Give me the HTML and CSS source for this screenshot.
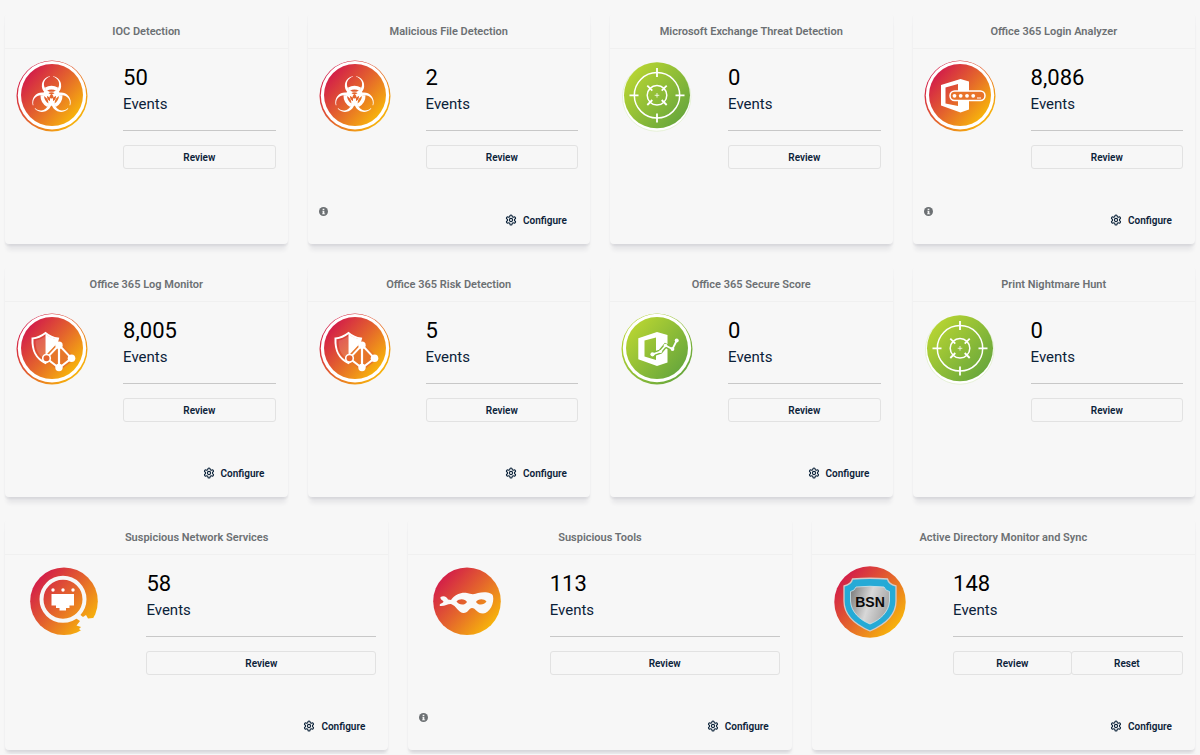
FILE: index.html
```html
<!DOCTYPE html>
<html lang="en">
<head>
    <meta charset="UTF-8">
    <meta name="viewport" content="width=device-width, initial-scale=1.0">
    <title>Security Apps</title>
    <link rel="stylesheet" href="styles.css">
</head>
<body>

    <!-- shared icons -->
    <svg class="sprite" aria-hidden="true">
        <defs>
            <linearGradient id="hot" x1="0.1" y1="0.15" x2="0.9" y2="0.85">
                <stop offset="0" stop-color="#d21b4a"/>
                <stop offset="0.5" stop-color="#e4652c"/>
                <stop offset="1" stop-color="#f8b70a"/>
            </linearGradient>
            <linearGradient id="green" x1="0.1" y1="0.15" x2="0.9" y2="0.85">
                <stop offset="0" stop-color="#b7d432"/>
                <stop offset="1" stop-color="#68a73c"/>
            </linearGradient>
            <linearGradient id="steel" x1="0" y1="0" x2="1" y2="0.3">
                <stop offset="0" stop-color="#777"/>
                <stop offset="0.55" stop-color="#d8d8d8"/>
                <stop offset="1" stop-color="#aaa"/>
            </linearGradient>

            <symbol id="badge-hot" viewBox="0 0 72 72">
                <circle cx="36" cy="36" r="35.5" fill="url(#hot)"/>
                <circle cx="36" cy="35.2" r="34.2" fill="#fff"/>
                <circle cx="36" cy="35" r="31" fill="url(#hot)"/>
            </symbol>
            <symbol id="badge-green" viewBox="0 0 72 72">
                <circle cx="36" cy="36" r="35.5" fill="url(#green)"/>
                <circle cx="36" cy="35" r="34.2" fill="#fff"/>
                <circle cx="36" cy="35" r="31" fill="url(#green)"/>
            </symbol>

            <symbol id="biohazard" viewBox="0 0 72 72">
                <use href="#badge-hot"/>
                <g fill="#fff" transform="translate(35.5 36.7)">
                    <path id="arm" d="M-2-20.5A9.7 9.7 0 1 0 2-20.5L1.5-19.9A7.6 7.6 0 1 1-1.5-19.9z"/>
                    <use href="#arm" transform="rotate(120)"/>
                    <use href="#arm" transform="rotate(240)"/>
                    <circle r="4.5" fill="#e4652c"/>
                    <path id="arc" d="M-5.8-7.3Q0-10.8 5.8-7.3" fill="none" stroke="#fff" stroke-width="3.6"/>
                    <use href="#arc" transform="rotate(120)"/>
                    <use href="#arc" transform="rotate(240)"/>
                    <path d="M0 9V1M-7.8-4.5L-1-.6M7.8-4.5L1-.6" stroke="#fff" stroke-width="3"/>
                    <circle r="1.9" fill="#e4652c"/>
                </g>
            </symbol>

            <symbol id="target" viewBox="0 0 72 72">
                <circle cx="35.7" cy="37" r="34.2" fill="#fff" stroke="#d9ebc0" stroke-width="0.6"/>
                <circle cx="36" cy="35.3" r="33" fill="url(#green)"/>
                <g fill="none" stroke="#fff" stroke-width="1.5">
                    <circle cx="36" cy="35.3" r="22.7"/>
                    <circle cx="36" cy="35.3" r="9.8"/>
                    <path d="M36 8v9M36 53.5v9M8.5 35.3h9M54.5 35.3h9" stroke-width="1.8"/>
                    <path d="M26.3 25.6l5 5M45.7 25.6l-5 5M26.3 45l5-5M45.7 45l-5-5" stroke-width="1.8"/>
                    <path d="M36 33v4.6M33.7 35.3h4.6" stroke-width="0.8"/>
                </g>
            </symbol>

            <symbol id="office-login" viewBox="0 0 72 72">
                <use href="#badge-hot"/>
                <path fill="#fff" fill-rule="evenodd" d="M17 25L36.5 19L45 21.5V49.5L36.5 52.5L17 45.5zM21.5 27.5V43.5L34 46V24z"/>
                <rect x="26" y="31" width="35" height="9.5" rx="4.7" fill="#e8732a" stroke="#fff" stroke-width="1.5"/>
                <g fill="#fff">
                    <circle cx="30.5" cy="35.8" r="1.9"/>
                    <circle cx="36.7" cy="35.8" r="1.9"/>
                    <circle cx="43" cy="35.8" r="1.9"/>
                    <circle cx="49.2" cy="35.8" r="1.9"/>
                    <rect x="53" y="37.5" width="4" height="1"/>
                </g>
            </symbol>

            <symbol id="shield-net" viewBox="0 0 72 72">
                <use href="#badge-hot"/>
                <path d="M29.5 20C25 23.5 21 25 16.5 25.5C16 37 19 45 29.5 50C33 48 35 46 37 43.5L42 25.5C37.5 25 33.5 23.5 29.5 20z" fill="none" stroke="#fff" stroke-width="2"/>
                <path d="M29.5 23C26 25.5 23 27 19.5 27.5C19.5 36 22 42.5 29.5 46.5z" fill="#fff" opacity="0.15"/>
                <path d="M29.5 21C33 24 37 25.5 42 26L40 36L32 43L29.5 47z" fill="#fff"/>
                <path d="M43 32L30.5 45.3L43 55L55.5 45.3z" fill="#e77629" stroke="#e77629" stroke-width="5"/>
                <path d="M43 32L30.5 45.3L43 55L55.5 45.3z" fill="#e77629" stroke="#fff" stroke-width="2"/>
                <path d="M43 32V55" stroke="#fff" stroke-width="2.2"/>
                <circle cx="43" cy="32.3" r="3.7" fill="#fff"/>
                <circle cx="30.5" cy="45.3" r="3.8" fill="#e4632d" stroke="#fff" stroke-width="1.6"/>
                <circle cx="55.5" cy="45.3" r="3.8" fill="#fff"/>
                <circle cx="43" cy="54.5" r="3.7" fill="#fff"/>
            </symbol>

            <symbol id="office-score" viewBox="0 0 72 72">
                <use href="#badge-green"/>
                <path fill="#fff" fill-rule="evenodd" d="M17.3 25.3L36 19L46.5 22V49.5L36 53L17.3 46.3zM23.5 27.5V43.5L35 47V24.5z"/>
                <path d="M31.5 41.3L39.5 38.5L44.5 32.5L51.5 36L55.7 27.5" fill="none" stroke="#7fb73a" stroke-width="4.5"/>
                <path d="M31.5 41.3L39.5 38.5L44.5 32.5L51.5 36L55.7 27.5" fill="none" stroke="#fff" stroke-width="1.8"/>
                <g fill="#fff">
                    <circle cx="31.5" cy="41.3" r="2.1"/>
                    <circle cx="39.5" cy="38.5" r="1.6"/>
                    <circle cx="44.5" cy="32.5" r="1.8"/>
                    <circle cx="51.5" cy="36" r="1.9"/>
                    <circle cx="55.7" cy="27.5" r="2"/>
                </g>
            </symbol>

            <symbol id="port-search" viewBox="0 0 72 72">
                <circle cx="36" cy="35.3" r="33.8" fill="url(#hot)"/>
                <circle cx="35" cy="33.3" r="21.5" fill="none" stroke="#f7f7f7" stroke-width="4"/>
                <path fill="#f7f7f7" d="M46 51L50 47L55 51L58 49L60 52.5L65 52L66.5 54L72 54V72H54L53.5 65L51 63L53 61L48.5 59.5L52 55z"/>
                <path fill="#fff" d="M23.5 28H46V39.5H41.5V42H38V44.5H31.5V42H28V39.5H23.5z"/>
                <g fill="#fff">
                    <circle cx="25" cy="24" r="1.7"/>
                    <circle cx="35" cy="24" r="1.7"/>
                    <circle cx="45" cy="24" r="1.7"/>
                </g>
            </symbol>

            <symbol id="mask" viewBox="0 0 72 72">
                <circle cx="36" cy="35.3" r="33.8" fill="url(#hot)"/>
                <path fill="#f9f9f9" fill-rule="evenodd" d="M20 34C24 28 31 26 36 27C40 28.5 44 28.5 47 27C53 25.5 61 26 62 30C63.5 37 59 47 52 47.5C46 47.5 44.5 42 41 42C38 42 37 47.5 32 47C27 46 25.5 40 20 38C17 37.5 14 40.5 9 40C7.5 37.5 12 37.5 12.5 35.5C11.5 34 9 33.5 9.5 31C13 29 16 31 17 33.5zM25.5 35.5C28 32.5 34 32.5 36 36C34 39.5 28 39.5 25.5 35.5zM45 36C47 32.5 53 32.5 55.5 35.5C53 39.5 47 39.5 45 36z"/>
            </symbol>

            <symbol id="bsn" viewBox="0 0 72 72">
                <circle cx="36" cy="36" r="35.7" fill="url(#hot)"/>
                <path d="M18.5 13Q36 11.5 53.5 13Q54.5 18 62 20V35C62 50 50 59 36 65C22 59 10 50 10 35V20Q17.5 18 18.5 13z" fill="#25aad6" stroke="#d5c9c6" stroke-width="1.3"/>
                <path d="M22 21Q36 19.5 50 21Q51.5 25 55.5 25.5V35C55 46 46 54 36 58C26 54 17 46 16.5 35V25.5Q20.5 25 22 21z" fill="url(#steel)" stroke="#d5e4ea" stroke-width="0.8"/>
                <text x="36" y="41" class="bsn-text" text-anchor="middle">BSN</text>
            </symbol>

            <symbol id="gear" viewBox="0 0 24 24">
                <g fill="none" stroke="currentColor" stroke-width="2.2">
                    <path d="M12.22 2h-.44a2 2 0 0 0-2 2v.18a2 2 0 0 1-1 1.73l-.43.25a2 2 0 0 1-2 0l-.15-.08a2 2 0 0 0-2.73.73l-.22.38a2 2 0 0 0 .73 2.73l.15.1a2 2 0 0 1 1 1.72v.51a2 2 0 0 1-1 1.74l-.15.09a2 2 0 0 0-.73 2.73l.22.38a2 2 0 0 0 2.73.73l.15-.08a2 2 0 0 1 2 0l.43.25a2 2 0 0 1 1 1.73V20a2 2 0 0 0 2 2h.44a2 2 0 0 0 2-2v-.18a2 2 0 0 1 1-1.73l.43-.25a2 2 0 0 1 2 0l.15.08a2 2 0 0 0 2.73-.73l.22-.39a2 2 0 0 0-.73-2.73l-.15-.08a2 2 0 0 1-1-1.74v-.5a2 2 0 0 1 1-1.74l.15-.09a2 2 0 0 0 .73-2.73l-.22-.38a2 2 0 0 0-2.73-.73l-.15.08a2 2 0 0 1-2 0l-.43-.25a2 2 0 0 1-1-1.73V4a2 2 0 0 0-2-2z"/>
                    <circle cx="12" cy="12" r="3.2"/>
                </g>
            </symbol>

            <symbol id="info" viewBox="0 0 16 16">
                <circle cx="8" cy="8" r="8" fill="currentColor"/>
                <path d="M6.5 3h3v2.5h-3zM6 6.5h3.5v5H11V13H5.5v-1.5h1V8H6z" fill="#f7f7f7"/>
            </symbol>
        </defs>
    </svg>

    <main class="app-grid">
        <section class="card">
            <h2 class="card-title">IOC Detection</h2>
            <div class="card-body">
                <div class="card-icon"><svg><use href="#biohazard"/></svg></div>
                <div class="card-info">
                    <p class="count">50</p>
                    <p class="label">Events</p>
                    <hr>
                    <div class="actions"><button type="button">Review</button></div>
                </div>
            </div>
        </section>

        <section class="card">
            <h2 class="card-title">Malicious File Detection</h2>
            <div class="card-body">
                <div class="card-icon"><svg><use href="#biohazard"/></svg></div>
                <div class="card-info">
                    <p class="count">2</p>
                    <p class="label">Events</p>
                    <hr>
                    <div class="actions"><button type="button">Review</button></div>
                </div>
            </div>
            <div class="card-footer">
                <svg class="info-icon"><use href="#info"/></svg>
                <button type="button" class="configure"><svg><use href="#gear"/></svg>Configure</button>
            </div>
        </section>

        <section class="card">
            <h2 class="card-title">Microsoft Exchange Threat Detection</h2>
            <div class="card-body">
                <div class="card-icon"><svg><use href="#target"/></svg></div>
                <div class="card-info">
                    <p class="count">0</p>
                    <p class="label">Events</p>
                    <hr>
                    <div class="actions"><button type="button">Review</button></div>
                </div>
            </div>
        </section>

        <section class="card">
            <h2 class="card-title">Office 365 Login Analyzer</h2>
            <div class="card-body">
                <div class="card-icon"><svg><use href="#office-login"/></svg></div>
                <div class="card-info">
                    <p class="count">8,086</p>
                    <p class="label">Events</p>
                    <hr>
                    <div class="actions"><button type="button">Review</button></div>
                </div>
            </div>
            <div class="card-footer">
                <svg class="info-icon"><use href="#info"/></svg>
                <button type="button" class="configure"><svg><use href="#gear"/></svg>Configure</button>
            </div>
        </section>

        <section class="card">
            <h2 class="card-title">Office 365 Log Monitor</h2>
            <div class="card-body">
                <div class="card-icon"><svg><use href="#shield-net"/></svg></div>
                <div class="card-info">
                    <p class="count">8,005</p>
                    <p class="label">Events</p>
                    <hr>
                    <div class="actions"><button type="button">Review</button></div>
                </div>
            </div>
            <div class="card-footer">
                <button type="button" class="configure"><svg><use href="#gear"/></svg>Configure</button>
            </div>
        </section>

        <section class="card">
            <h2 class="card-title">Office 365 Risk Detection</h2>
            <div class="card-body">
                <div class="card-icon"><svg><use href="#shield-net"/></svg></div>
                <div class="card-info">
                    <p class="count">5</p>
                    <p class="label">Events</p>
                    <hr>
                    <div class="actions"><button type="button">Review</button></div>
                </div>
            </div>
            <div class="card-footer">
                <button type="button" class="configure"><svg><use href="#gear"/></svg>Configure</button>
            </div>
        </section>

        <section class="card">
            <h2 class="card-title">Office 365 Secure Score</h2>
            <div class="card-body">
                <div class="card-icon"><svg><use href="#office-score"/></svg></div>
                <div class="card-info">
                    <p class="count">0</p>
                    <p class="label">Events</p>
                    <hr>
                    <div class="actions"><button type="button">Review</button></div>
                </div>
            </div>
            <div class="card-footer">
                <button type="button" class="configure"><svg><use href="#gear"/></svg>Configure</button>
            </div>
        </section>

        <section class="card">
            <h2 class="card-title">Print Nightmare Hunt</h2>
            <div class="card-body">
                <div class="card-icon"><svg><use href="#target"/></svg></div>
                <div class="card-info">
                    <p class="count">0</p>
                    <p class="label">Events</p>
                    <hr>
                    <div class="actions"><button type="button">Review</button></div>
                </div>
            </div>
        </section>

        <section class="card wide">
            <h2 class="card-title">Suspicious Network Services</h2>
            <div class="card-body">
                <div class="card-icon"><svg><use href="#port-search"/></svg></div>
                <div class="card-info">
                    <p class="count">58</p>
                    <p class="label">Events</p>
                    <hr>
                    <div class="actions"><button type="button">Review</button></div>
                </div>
            </div>
            <div class="card-footer">
                <button type="button" class="configure"><svg><use href="#gear"/></svg>Configure</button>
            </div>
        </section>

        <section class="card wide">
            <h2 class="card-title">Suspicious Tools</h2>
            <div class="card-body">
                <div class="card-icon"><svg><use href="#mask"/></svg></div>
                <div class="card-info">
                    <p class="count">113</p>
                    <p class="label">Events</p>
                    <hr>
                    <div class="actions"><button type="button">Review</button></div>
                </div>
            </div>
            <div class="card-footer">
                <svg class="info-icon"><use href="#info"/></svg>
                <button type="button" class="configure"><svg><use href="#gear"/></svg>Configure</button>
            </div>
        </section>

        <section class="card wide">
            <h2 class="card-title">Active Directory Monitor and Sync</h2>
            <div class="card-body">
                <div class="card-icon"><svg><use href="#bsn"/></svg></div>
                <div class="card-info">
                    <p class="count">148</p>
                    <p class="label">Events</p>
                    <hr>
                    <div class="actions">
                        <button type="button">Review</button>
                        <button type="button">Reset</button>
                    </div>
                </div>
            </div>
            <div class="card-footer">
                <button type="button" class="configure"><svg><use href="#gear"/></svg>Configure</button>
            </div>
        </section>
    </main>

</body>
</html>
```
FILE: styles.css
```css
* {
    box-sizing: border-box;
}
body {
    margin: 0;
    font-family: Roboto, sans-serif;
    background-color: #f7f7f7;
    color: #0b2239;
}
.sprite {
    position: absolute;
    width: 0;
    height: 0;
}
.app-grid {
    display: grid;
    grid-template-columns: repeat(12, 1fr);
    gap: 22px 20px;
    padding: 13px 5px 4px;
}
.card {
    grid-column: span 3;
    display: flex;
    flex-direction: column;
    min-height: 231px;
    background-color: #f7f7f7;
    border-radius: 4px;
    box-shadow: 0 2px 2px rgba(40, 40, 70, 0.07), 0 8px 4px -2px rgba(40, 40, 70, 0.08);
}
.card.wide {
    grid-column: span 4;
}
.card-title {
    margin: 0;
    padding: 11px 10px 9px;
    border-bottom: 1px solid #f0f0f0;
    font-size: 11px;
    font-weight: 600;
    line-height: 15px;
    text-align: center;
    color: #6c7073;
}
.card-body {
    display: flex;
    gap: 36px;
    padding: 11px 12px 0;
}
.card-icon {
    flex: 3 0 70px;
    display: flex;
    justify-content: center;
    align-items: flex-start;
    min-width: 0;
}
.card-icon svg {
    flex: none;
    width: 72px;
    height: 72px;
}
.card-info {
    flex: 10 0 152px;
    padding-top: 5px;
}
.count {
    margin: 0;
    font-size: 22px;
    line-height: 26px;
    color: #000;
}
.label {
    margin: 0;
    padding-top: 3px;
    font-size: 15px;
    line-height: 20px;
}
hr {
    margin: 16px 0 14px;
    border: none;
    border-top: 1px solid #c8c8c8;
}
.actions {
    display: flex;
}
button {
    font-family: inherit;
    font-size: 10px;
    font-weight: 600;
    color: inherit;
    background-color: transparent;
    cursor: pointer;
}
.actions button {
    flex: 1 1 auto;
    height: 24px;
    padding: 0 6px;
    border: 1px solid #e2e2e2;
    border-radius: 3px;
}
.actions button + button {
    margin-left: -1px;
}
.actions button:hover {
    background-color: #eee;
}
.card-footer {
    display: flex;
    align-items: flex-start;
    margin-top: auto;
    padding: 0 12px 11px 11px;
}
.info-icon {
    width: 9px;
    height: 9px;
    color: #6c7073;
}
.configure {
    display: flex;
    align-items: center;
    gap: 6px;
    height: 26px;
    margin-left: auto;
    padding: 0 11px;
    border: none;
}
.configure svg {
    width: 12px;
    height: 12px;
}
.bsn-text {
    font-family: "Liberation Sans", Arial, sans-serif;
    font-size: 14px;
    font-weight: bold;
    fill: #0a0a0a;
}
```
